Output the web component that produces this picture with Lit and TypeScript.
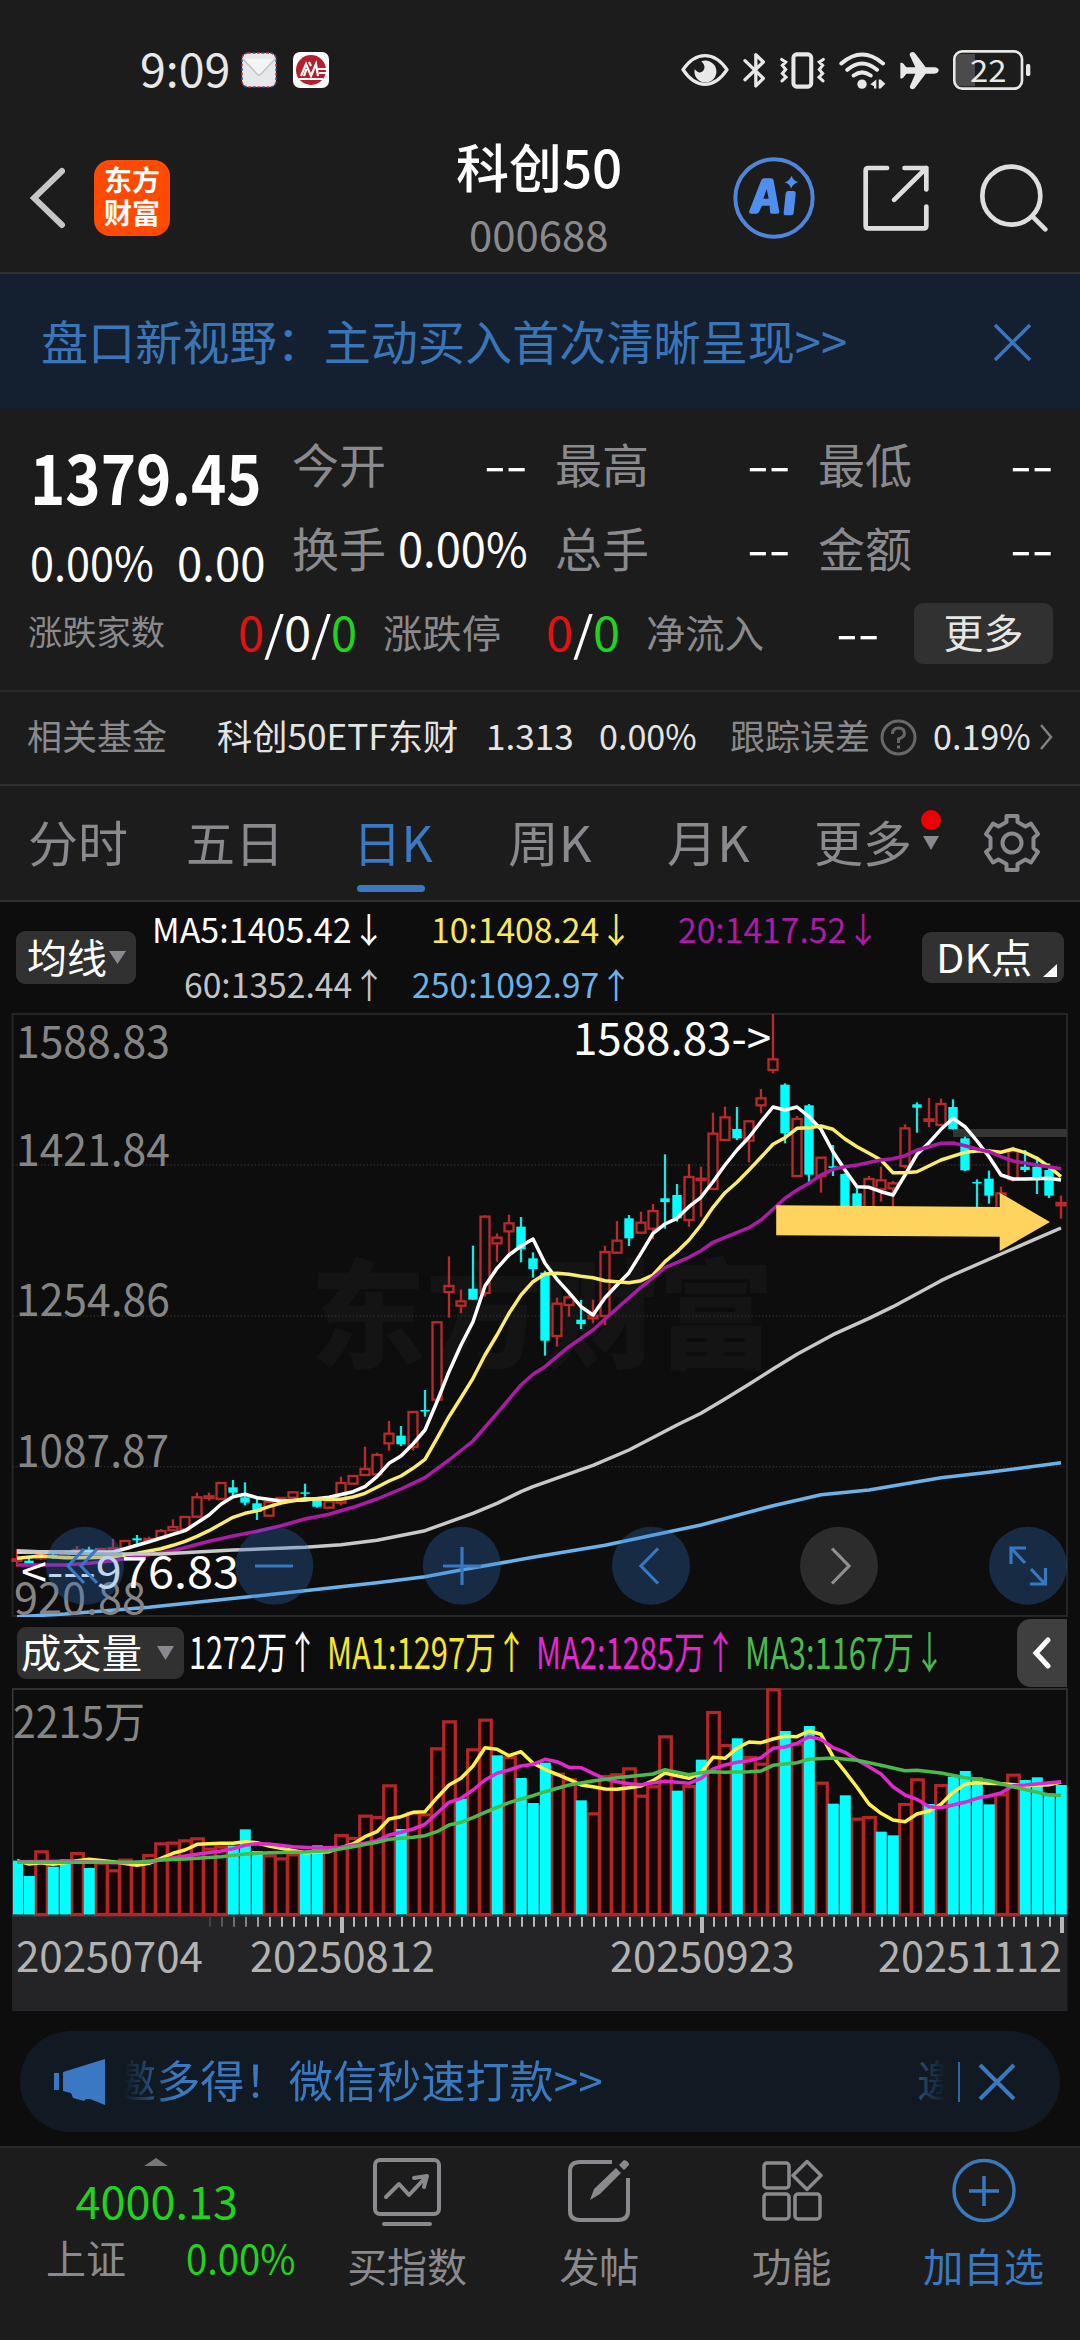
import { LitElement, html, svg, css } from "lit";
import { customElement, property, query } from "lit/decorators.js";

type Kind = "r" | "c";
type Candle = [Kind, number, number, number, number, number];

/* Daily bars: kind, high, body top, body bottom, low, volume top (thirds of a pixel). */
const CANDLES: Candle[] = [
  ["r", 1647, 1678, 1682, 1700, 572], ["c", 1675, 1682, 1692, 1695, 618], ["r", 1660, 1664, 1675, 1680, 541],
  ["c", 1658, 1664, 1670, 1676, 590], ["r", 1655, 1660, 1668, 1674, 568], ["r", 1638, 1650, 1658, 1662, 546],
  ["c", 1640, 1648, 1652, 1660, 594], ["r", 1644, 1647, 1652, 1656, 575], ["r", 1617, 1645, 1652, 1660, 598],
  ["r", 1621, 1623, 1646, 1648, 566], ["c", 1605, 1615, 1621, 1631, 578], ["r", 1610, 1617, 1620, 1628, 552],
  ["r", 1587, 1593, 1613, 1615, 517], ["r", 1558, 1581, 1591, 1593, 515], ["r", 1549, 1551, 1588, 1590, 508],
  ["r", 1478, 1492, 1550, 1553, 502], ["r", 1478, 1489, 1492, 1502, 533], ["r", 1446, 1449, 1497, 1498, 527],
  ["c", 1440, 1462, 1478, 1490, 527], ["c", 1447, 1492, 1508, 1516, 478], ["c", 1490, 1510, 1536, 1560, 543],
  ["r", 1505, 1506, 1547, 1549, 553], ["r", 1492, 1494, 1502, 1503, 562], ["r", 1474, 1477, 1493, 1495, 550],
  ["c", 1451, 1477, 1481, 1490, 549], ["c", 1499, 1500, 1520, 1523, 526], ["r", 1500, 1504, 1523, 1525, 535],
  ["r", 1430, 1449, 1508, 1516, 492], ["r", 1426, 1428, 1451, 1452, 501], ["r", 1340, 1407, 1425, 1427, 434],
  ["r", 1358, 1365, 1423, 1425, 438], ["r", 1263, 1301, 1330, 1352, 343], ["c", 1278, 1307, 1333, 1338, 477],
  ["r", 1234, 1236, 1341, 1352, 425], ["c", 1170, 1230, 1234, 1250, 430], ["r", 965, 967, 1199, 1201, 232],
  ["r", 769, 858, 876, 953, 151], ["r", 869, 904, 917, 940, 386], ["c", 737, 866, 899, 900, 235],
  ["r", 646, 650, 879, 890, 146], ["r", 700, 713, 730, 785, 256], ["r", 644, 670, 694, 762, 258],
  ["c", 651, 680, 748, 787, 324], ["c", 757, 775, 807, 833, 399], ["c", 812, 818, 1022, 1067, 278],
  ["r", 893, 911, 1008, 1040, 308], ["r", 880, 892, 915, 950, 325], ["c", 900, 959, 972, 987, 391],
  ["r", 899, 947, 955, 970, 427], ["r", 737, 756, 948, 975, 315], ["r", 663, 722, 758, 760, 310],
  ["c", 645, 655, 715, 738, 292], ["r", 635, 668, 698, 700, 374], ["r", 612, 633, 686, 718, 346],
  ["c", 463, 595, 606, 686, 196], ["c", 552, 585, 655, 665, 362], ["r", 492, 531, 660, 680, 345],
  ["r", 500, 536, 539, 650, 269], ["r", 338, 401, 567, 569, 123], ["r", 320, 352, 420, 422, 222],
  ["c", 321, 387, 415, 420, 205], ["r", 361, 364, 422, 487, 258], ["r", 267, 295, 316, 340, 278],
  ["r", 42, 178, 210, 220, 55], ["c", 250, 254, 400, 430, 183], ["r", 348, 357, 528, 530, 218],
  ["c", 312, 316, 524, 548, 168], ["r", 470, 473, 528, 578, 335], ["c", 435, 499, 503, 528, 401],
  ["c", 520, 522, 640, 640, 376], ["c", 560, 580, 640, 640, 443], ["r", 528, 537, 640, 640, 438],
  ["r", 500, 541, 568, 605, 485], ["r", 543, 550, 565, 640, 496], ["r", 373, 385, 498, 505, 399],
  ["c", 307, 313, 323, 398, 325], ["r", 294, 358, 362, 381, 402], ["r", 296, 312, 375, 377, 342],
  ["c", 298, 321, 387, 389, 320], ["c", 410, 415, 511, 513, 303], ["c", 538, 546, 550, 622, 322],
  ["c", 512, 536, 587, 611, 403], ["r", 560, 580, 640, 640, 370], ["r", 440, 453, 538, 545, 311],
  ["c", 450, 500, 510, 516, 330], ["c", 470, 500, 533, 582, 322], ["c", 490, 510, 587, 594, 370],
  ["r", 587, 609, 616, 656, 345],
];

/* Volume bars that are filled; the rest are hollow. */
const VOL_FILLED = new Set([
  0, 1, 3, 4, 6, 18, 19, 20, 24, 25, 32, 37, 40, 42, 43, 44, 47, 55, 57, 60, 64, 66, 68, 69, 72, 73, 76, 78, 79, 80,
  81, 84, 85, 86, 87,
]);

const MA5 = "0 1656 4 1656 8 1656 9 1646 11 1625 14 1592 16 1545 17 1513 18 1490 19 1483 20 1493 22 1503 24 1500 26 1492 28 1475 29 1460 30 1430 31 1390 32 1368 33 1332 34 1290 35 1205 36 1115 37 1035 38 965 39 858 40 805 41 765 42 738 43 717 44 790 45 838 46 878 47 920 48 945 49 893 50 855 51 818 52 760 53 700 54 672 55 655 56 620 57 592 58 545 59 495 60 450 61 412 62 365 63 321 64 330 65 321 66 350 67 388 68 455 69 510 70 560 71 562 72 575 73 585 74 525 75 463 76 428 77 388 78 355 79 380 80 423 81 470 82 525 83 537 84 537 85 536 86 535 87 540";
const MA10 = "0 1675 2 1668 4 1673 6 1673 8 1670 10 1660 12 1646 13 1636 14 1624 15 1609 16 1592 17 1572 18 1552 19 1540 20 1532 21 1520 22 1509 23 1502 24 1496 25 1497 26 1498 27 1498 28 1491 29 1480 30 1462 31 1443 32 1428 33 1405 34 1378 35 1315 36 1250 37 1193 38 1135 39 1065 40 1005 41 940 42 885 43 845 44 822 45 820 46 823 47 829 48 833 49 842 50 845 51 848 52 842 53 825 54 785 55 755 56 720 57 675 58 622 59 578 60 547 61 510 62 472 63 433 64 413 65 385 66 383 67 378 68 388 69 417 70 440 71 460 72 480 73 518 74 518 75 515 77 480 79 457 80 453 81 453 82 457 83 447 84 458 85 475 86 500 87 530";
const MA20 = "0 1695 4 1695 6 1690 8 1682 10 1670 13 1652 16 1624 18 1608 20 1594 22 1577 24 1557 26 1543 28 1522 30 1497 32 1467 34 1433 36 1380 38 1323 40 1240 42 1155 43 1123 44 1100 46 1040 48 990 49 957 51 893 52 862 53 833 54 803 56 772 57 752 58 727 61 683 62 660 63 628 64 595 65 570 66 550 67 525 68 508 69 500 70 495 72 480 73 476 74 467 75 450 76 440 77 430 78 429 79 437 80 447 81 455 82 470 83 483 85 495 87 506";
const MA60 = "0 1652 6 1662 12 1662 18 1650 24 1642 27 1634 30 1621 34 1592 38 1540 40 1510 42 1475 43 1460 48 1396 51 1350 55 1275 57 1240 59 1197 61 1153 63 1107 65 1063 68 1004 71 955 73 920 77 842 78 825 82 762 87 684";
const MA250 = "0 1850 4 1842 11 1822 20 1788 30 1748 34 1730 37 1710 43 1672 49 1636 57 1575 63 1517 67 1484 71 1470 77 1433 81 1417 87 1388";
const VMA1 = "0 572 1 582 2 578 3 583 4 578 5 572 6 568 8 575 10 586 11 580 12 565 13 550 14 540 15 523 16 521 17 520 18 520 19 515 20 518 21 528 22 535 24 548 26 545 27 533 28 522 29 500 30 485 31 447 32 440 33 427 34 425 35 383 36 345 37 325 38 288 39 233 40 238 41 257 42 245 43 280 44 298 45 313 46 328 47 345 48 350 49 357 50 358 51 353 52 348 53 332 54 309 55 317 56 325 57 308 58 262 59 265 60 235 61 216 62 218 63 207 64 199 65 200 66 183 67 193 68 260 69 305 70 352 71 402 72 430 73 450 74 455 75 432 76 423 77 403 78 367 79 343 80 338 82 341 84 347 86 344 87 336";
const VMA2 = "0 575 4 574 6 575 8 578 11 576 13 563 15 553 17 543 18 536 19 526 20 521 21 522 23 530 25 534 27 532 29 520 30 512 31 495 32 487 33 477 34 463 35 430 36 397 37 385 38 360 39 330 40 310 41 300 42 288 43 283 44 268 45 275 46 292 47 293 48 310 49 327 50 335 51 341 52 344 53 338 54 334 55 337 56 340 57 325 58 297 59 285 60 277 61 272 62 263 63 235 64 231 65 220 66 200 67 208 68 233 69 247 70 270 71 290 72 312 73 350 74 375 75 388 76 410 77 413 78 405 79 397 80 385 81 378 82 369 83 347 84 345 87 335";
const VMA3 = "0 577 10 577 12 570 14 567 17 560 19 552 21 548 24 546 26 542 28 530 30 517 31 508 33 502 34 497 35 485 36 465 37 457 38 443 39 427 40 412 41 398 42 387 43 377 44 365 46 345 48 333 50 323 53 312 54 299 56 314 57 308 58 305 59 307 61 305 62 303 63 286 65 278 66 268 68 264 70 271 72 286 74 302 75 301 77 309 79 323 81 332 83 350 85 367 86 375 87 376";

const cx = (i: number) => 17 + 12 * i;

function linePoints(src: string, base: number): string {
  const n = src.split(" ").map(Number);
  const out: string[] = [];
  for (let k = 0; k < n.length; k += 2) out.push(`${cx(n[k])},${(base + n[k + 1] / 3).toFixed(1)}`);
  return out.join(" ");
}

function label(x: number, y: number, w: number, size: number, cls: string, text: string) {
  return svg`<text class=${cls} x=${x} y=${y} font-size=${size} textLength=${w} lengthAdjust="spacingAndGlyphs">${text}</text>`;
}

/* One line of text, condensed or widened to an exact advance width. */
@customElement("fit-text")
export class FitText extends LitElement {
  @property({ type: Number }) w = 0;
  @property() text = "";
  @query("span") private line!: HTMLSpanElement;

  static styles = css`
    :host { display: inline-block; flex: none; line-height: 1; }
    span { display: inline-block; white-space: pre; transform-origin: 0 50%; line-height: 1; }
  `;

  render() {
    return html`<span>${this.text}</span>`;
  }

  updated() {
    const natural = this.line.offsetWidth;
    if (!natural) return;
    this.style.width = `${this.w}px`;
    this.line.style.marginRight = `${this.w - natural}px`;
    this.line.style.transform = `translateY(-0.06em) scaleX(${this.w / natural})`;
  }
}

@customElement("price-chart")
export class PriceChart extends LitElement {
  static styles = css`
    :host { display: block; height: 604px; }
    svg { display: block; font-family: "Noto Sans CJK SC", sans-serif; }
    .frame { fill: none; stroke: #252525; stroke-width: 2; }
    .grid { stroke: #292929; stroke-width: 1.5; stroke-dasharray: 1.5 2; }
    .mark { fill: #141414; font-weight: 900; }
    .scale { fill: #858585; }
    .peak { fill: #fff; }
    .line { fill: none; stroke-width: 3.5; stroke-linejoin: round; }
    .rw { stroke: #b92a2a; stroke-width: 2.3; fill: #0d0d0d; }
    .cw { stroke: #1fe4e4; stroke-width: 2.3; }
    .cb { fill: #00ffff; }
    .blue { fill: #2d72c6; fill-opacity: 0.3; }
    .gray { fill: #ffffff; fill-opacity: 0.13; }
    .ic { fill: none; stroke: #3877c2; stroke-width: 3.2; }
    .ic.off { stroke: #909090; }
  `;

  private candle([kind, hi, top, bot, lo]: Candle, i: number) {
    const x = cx(i);
    const y = (v: number) => 1000 + v / 3;
    const h = Math.max((bot - top) / 3, 1.5);
    return kind === "c"
      ? svg`<line class="cw" x1=${x} x2=${x} y1=${y(hi)} y2=${y(lo)} /><rect class="cb" x=${x - 4.7} y=${y(top)} width="9.4" height=${h} />`
      : svg`<line class="rw" x1=${x} x2=${x} y1=${y(hi)} y2=${y(lo)} /><rect class="rw" x=${x - 4.5} y=${y(top)} width="9" height=${h} />`;
  }

  render() {
    return html`<svg width="1080" height="604" viewBox="0 1013 1080 604">
      ${label(310, 1358.5, 464, 118, "mark", "东方财富")}
      <rect class="frame" x="12.5" y="1014" width="1054.5" height="602" />
      ${[1165, 1316, 1466.7].map((y) => svg`<line class="grid" x1="13" x2="1067" y1=${y} y2=${y} />`)}
      <rect x="953" y="1129" width="114" height="8" fill="#353535" />
      ${CANDLES.map((c, i) => this.candle(c, i))}
      <polyline class="line" stroke="#fff" points=${linePoints(MA5, 1000)} />
      <polyline class="line" stroke="#fbec6d" points=${linePoints(MA10, 1000)} />
      <polyline class="line" stroke="#ac1ba6" points=${linePoints(MA20, 1000)} />
      <polyline class="line" stroke="#c8c8c8" points=${linePoints(MA60, 1000)} />
      <polyline class="line" stroke="#6cb2ea" points=${linePoints(MA250, 1000)} />
      ${label(16, 1057.5, 154, 45, "scale", "1588.83")}
      ${label(16, 1165.5, 154, 45, "scale", "1421.84")}
      ${label(16, 1316, 154, 45, "scale", "1254.86")}
      ${label(16, 1467, 153, 45, "scale", "1087.87")}
      ${label(14, 1613.5, 132, 44, "scale", "920.88")}
      ${label(573, 1055, 198, 45, "peak", "1588.83->")}
      ${label(21, 1587.5, 218, 44, "peak", "<---976.83")}
      <path fill="#fed35e" d="M776.2 1205.3 L999.7 1207 V1192.7 L1050 1222 L999.7 1251 V1236.8 L776.2 1235.2 Z" />
      ${[85, 274.3, 461.8, 651, 1028].map((x) => svg`<circle class="blue" cx=${x} cy="1565.7" r="39" />`)}
      <circle class="gray" cx="839" cy="1565.7" r="39" />
      <path class="ic" d="M84 1549 L68 1566 L84 1583 M97 1549 L81 1566 L97 1583" />
      <path class="ic" d="M255 1566 H293" />
      <path class="ic" d="M443 1566 H481 M462 1547 V1585" />
      <path class="ic" d="M658 1548.5 L641 1566 L658 1583.5" />
      <path class="ic off" d="M832 1548.5 L849 1566 L832 1583.5" />
      <path class="ic" d="M1026 1548 H1011 V1564 M1011 1548 L1025 1563 M1030 1584 H1045.500 V1568 M1045 1584 L1031 1569" />
    </svg>`;
  }
}

@customElement("volume-chart")
export class VolumeChart extends LitElement {
  static styles = css`
    :host { display: block; height: 324px; }
    svg { display: block; font-family: "Noto Sans CJK SC", sans-serif; }
    .frame { fill: none; stroke: #3c3c3c; stroke-width: 1.4; }
    .up { fill: #150606; stroke: #b52626; stroke-width: 3.2; }
    .down { fill: #00ffff; }
    .line { fill: none; stroke-width: 3.5; stroke-linejoin: round; }
    .scale { fill: #858585; }
    .date { fill: #b2b2b2; }
    .tick { stroke: #b8b8b8; }
  `;

  render() {
    const floor = 1914.5;
    const ticks = Array.from({ length: 72 }, (_, k) => k + 16);
    return html`<svg width="1080" height="324" viewBox="0 1688 1080 324">
      <rect x="12" y="1917" width="1055.500" height="94" fill="#242426" />
      <path class="frame" d="M12.700 1916 V1689 H1067 V1916 Z" />
      ${label(13, 1737.5, 132, 43, "scale", "2215万")}
      ${CANDLES.map((c, i) => {
        const y = 1670 + c[5] / 3;
        return VOL_FILLED.has(i) ? svg`` : svg`<rect class="up" x=${cx(i) - 5.3} y=${y + 1.5} width="11.600" height=${floor - y - 1.5} />`;
      })}
      ${CANDLES.map((c, i) => {
        const y = 1670 + c[5] / 3;
        return VOL_FILLED.has(i) ? svg`<rect class="down" x=${cx(i) - (i ? 5.2 : 4)} y=${y} width=${i ? 11 : 10} height=${floor - y} />` : svg``;
      })}
      <polyline class="line" stroke="#fff04a" points=${linePoints(VMA1, 1670)} />
      <polyline class="line" stroke="#e128cf" points=${linePoints(VMA2, 1670)} />
      <polyline class="line" stroke="#4bb94b" points=${linePoints(VMA3, 1670)} />
      ${ticks.map((i) => {
        const major = i === 27 || i === 57 || i === 87;
        return svg`<line class="tick" x1=${cx(i) + 1} x2=${cx(i) + 1} y1="1917" y2=${major ? 1933 : 1926.7}
          stroke-width=${major ? 4 : 2} opacity=${Math.min(1, 0.2 + (i - 16) * 0.15)} />`;
      })}
      ${label(16, 1971.5, 187, 42, "date", "20250704")}
      ${label(250, 1971.5, 185, 42, "date", "20250812")}
      ${label(610, 1971.5, 185, 42, "date", "20250923")}
      ${label(878, 1971.5, 184, 42, "date", "20251112")}
    </svg>`;
  }
}

@customElement("app-root")
export class AppRoot extends LitElement {
  static styles = css`
    :host {
      display: block; width: 1080px; height: 2340px; overflow: hidden; background: #0d0d0d; color: #fff;
      font-family: "Noto Sans CJK SC", sans-serif; line-height: 1;
    }
    * { box-sizing: border-box; }
    svg { display: block; flex: none; }
    .row { display: flex; align-items: center; }
    .top { background: #1c1c1c; }
    .muted { color: #8a8a8e; }
    .red { color: #e01212; }
    .green { color: #1fd31f; }

    .status { height: 122px; padding: 18px 49px 0 140px; color: #e8e8e8; }
    .status .time { font-size: 46px; margin-right: 11px; }
    .status .mail { margin-right: 16px; }
    .status .icons { margin-left: auto; gap: 14px; }
    .batt { width: 78px; height: 40px; }
    .battery { position: relative; width: 78px; height: 40px; }
    .battery fit-text { position: absolute; left: 17px; top: 5px; font-size: 31px; }

    .nav { display: grid; grid-template-columns: 1fr 170px 1fr; height: 152px; padding: 0 32px 0 30px; border-bottom: 2px solid #303030; }
    .nav .left { gap: 29px; padding-top: 2px; }
    .logo {
      width: 76px; height: 76px; border-radius: 16px; background: #ff4a03; display: flex; flex-direction: column;
      align-items: center; justify-content: center; font-size: 28px; font-weight: 700; line-height: 33px; padding-bottom: 4px;
    }
    .title { display: flex; flex-direction: column; align-items: center; padding-top: 21px; }
    .title .name { font-size: 52px; font-weight: 500; }
    .title .code { font-size: 41px; color: #8a8a8e; margin-top: 20px; }
    .nav .right { justify-content: flex-end; padding-top: 2px; }
    .nav .right .share { margin: 0 51px 0 48px; }

    .banner { height: 135px; padding: 1px 48px 0 41px; background: #142030; color: #3a75b8; justify-content: space-between; font-size: 47px; }

    .quote { height: 281px; }
    .main { display: flex; height: 182px; padding-left: 30px; }
    .price { width: 262px; display: flex; flex-direction: column; padding-top: 36px; }
    .price .big { font-size: 69px; font-weight: 700; }
    .price .chg { font-size: 46px; gap: 23px; margin-top: 27px; }
    .grid { display: grid; grid-template-columns: repeat(3, 236px); column-gap: 27px; grid-auto-rows: 84px; padding-top: 14px; font-size: 47px; }
    .cell { display: flex; align-items: center; justify-content: space-between; }
    .third { height: 84px; padding-left: 28px; font-size: 39px; }
    .third .n { font-size: 47px; width: 126px; justify-content: flex-end; margin-left: 66px; margin-right: 26px; }
    .third .n.b { width: 74px; margin-left: 45px; margin-right: 26px; }
    .third .d { font-size: 47px; margin: 0 34px 0 72px; }
    .third .l1 { font-size: 34px; }
    .more { width: 139px; height: 61px; border-radius: 9px; background: #313131; color: #e6e6e6; display: flex; align-items: center; justify-content: center; font-size: 40px; }

    .fund { height: 94px; border-top: 2px solid #282828; padding: 0 0 2px 27px; font-size: 35.5px; color: #e4e4e4; }
    .fund .a { margin-left: 50px; }
    .fund .b { margin-left: 28px; }
    .fund .c { margin-left: 25px; }
    .fund .d { margin: 0 10px 0 33px; }
    .fund .e { margin: 0 8px 0 16px; }

    .tabs { height: 118px; border-top: 2px solid #303030; border-bottom: 2px solid #303030; padding-left: 28px; font-size: 49px; color: #8a8a8e; }
    .tab { position: relative; }
    .tab.on { color: #3a79c4; }
    .tab.on::after { content: ""; position: absolute; left: 4px; top: 66px; width: 68px; height: 7px; border-radius: 4px; background: #3978c2; }
    .t2 { margin-left: 58px; }
    .t3 { margin-left: 69px; }
    .t4 { margin-left: 75px; }
    .t5 { margin-left: 75px; }
    .t6 { margin-left: 64px; }
    .drop { margin-left: 9px; }
    .gear { margin-left: 41px; }

    .legend { height: 111px; padding: 0 16px; }
    .chip { border-radius: 9px; background: #313131; display: flex; align-items: center; font-size: 40px; flex: none; }
    .avg { width: 120px; height: 53px; padding-left: 11px; gap: 2px; }
    .dk { width: 142px; height: 51px; padding-left: 14px; gap: 11px; margin-left: 43px; }
    .mas { display: grid; grid-template-columns: repeat(3, 247px); grid-auto-rows: 55px; justify-items: end; align-items: center; font-size: 34.5px; width: 743px; padding-left: 3px; }
    .m5 { color: #fff; }
    .m10 { color: #f8e85f; }
    .m20 { color: #ac1ba6; }
    .m60 { color: #c4c4c4; }
    .m250 { color: #6cb2ea; }

    .vol { height: 71px; padding-left: 17px; font-size: 44px; padding-right: 13px; }
    .vchip { width: 167px; height: 52px; padding-left: 4px; gap: 15px; margin-right: 5px; }
    .v1 { margin-left: 9px; color: #f5e62e; }
    .v2 { margin-left: 9px; color: #e128cf; }
    .v3 { margin-left: 9px; color: #4bb94b; }
    .fold { margin-left: auto; width: 50px; height: 68px; border-radius: 14px 0 0 14px; background: #3f3f3f; display: flex; align-items: center; justify-content: center; }

    .notice { margin: 19px 20px 14px; height: 101px; border-radius: 51px; background: #111a22; padding-left: 34px; padding-right: 44px; color: #3a78c0; font-size: 44px; }
    .ticker { width: 826px; height: 60px; margin-left: 19px; overflow: hidden; display: flex; align-items: center; -webkit-mask-image: linear-gradient(90deg, transparent, #000 50px, #000 calc(100% - 50px), transparent); mask-image: linear-gradient(90deg, transparent, #000 50px, #000 calc(100% - 50px), transparent); }
    .ticker fit-text:first-child { margin-left: -12px; }
    .ticker fit-text + fit-text { margin-left: 314px; }
    .bar { width: 2px; height: 40px; background: #2f66a8; margin: 0 18px 0 12px; }

    .bottom { height: 194px; border-top: 2px solid #2a2a2a; display: grid; grid-template-columns: 311px repeat(4, 192.25px); }
    .index { display: flex; flex-direction: column; align-items: center; padding-top: 10px; }
    .index .v { font-size: 45px; margin: 14px 0 0 2px; }
    .index .r { width: 250px; justify-content: space-between; margin: 14px 0 0 31px; font-size: 40px; }
    .item { display: flex; flex-direction: column; align-items: center; color: #8a8a8e; font-size: 40px; padding-top: 8px; gap: 20px; }
    .item.on { color: #3a78c0; }
  `;

  private cell(name: string, value: string, w = 44) {
    return html`<div class="cell"><fit-text class="muted" w="94" text=${name}></fit-text><fit-text w=${w} text=${value}></fit-text></div>`;
  }

  private statusBar() {
    return html`<div class="row status">
      <fit-text class="time" w="90" text="9:09"></fit-text>
      <svg class="mail" width="36" height="36" viewBox="0 0 36 36">
        <rect x="1" y="1" width="34" height="34" rx="6" fill="#e6e8ea" stroke="#c33" stroke-width="1.500" stroke-dasharray="3 6" />
        <rect x="1" y="1" width="34" height="34" rx="6" fill="none" stroke="#3558a8" stroke-width="1.500" stroke-dasharray="3 6" stroke-dashoffset="4.500" />
        <path d="M2 7 L16 22 Q18 24 20 22 L34 7" fill="#f4f4f4" stroke="#c0c4c8" stroke-width="1.500" />
      </svg>
      <svg width="36" height="36" viewBox="0 0 36 36">
        <rect width="36" height="36" rx="7" fill="#fff" />
        <circle cx="18" cy="18" r="15" fill="#b3202e" />
        <path d="M8 24 L13 12 L18 24 L23 12 L25 24 M11 24 L13.500 17 M18 14 L16 10" fill="none" stroke="#fff" stroke-width="2.200" />
        <path d="M25 17 H33 M26 21 H33 M6 27 H30" stroke="#fff" stroke-width="2" />
      </svg>
      <div class="row icons">
        <svg width="48" height="36" viewBox="25 48 144 108" fill="none" stroke="#e8e8e8" stroke-width="10">
          <path d="M31 101 Q60 59 97 59 Q134 59 163 101 Q134 145 97 145 Q60 145 31 101 Z" stroke-linejoin="round" />
          <path d="M86 76 A33 33 0 1 1 66 100 Q80 116 92 104 Q102 92 86 76 Z" fill="#e8e8e8" stroke="none" />
        </svg>
        <svg width="23" height="37" viewBox="214 47 70 110" fill="none" stroke="#e8e8e8" stroke-width="10" stroke-linejoin="round" stroke-linecap="round">
          <path d="M220 72 L276 126 L253 149 V54 L276 76 L220 130" />
        </svg>
        <svg width="45" height="37" viewBox="328 47 134 110" fill="none" stroke="#e8e8e8" stroke-width="12" stroke-linecap="round">
          <rect x="368" y="54" width="53" height="96" rx="10" />
          <path stroke-width="9" d="M333 69 L345 77 L335 87 L345 99 L335 111 L346 122 L334 133 M457 69 L445 77 L455 87 L445 99 L455 111 L444 122 L456 133" />
        </svg>
        <svg width="47" height="37" viewBox="505 47 141 110" fill="none" stroke="#e8e8e8" stroke-width="12" stroke-linecap="round">
          <path d="M512 81 Q574 27 637 81 M530 100 Q574 62 619 100 M549 117 Q574 98 600 117" />
          <circle cx="574" cy="143" r="14" fill="#e8e8e8" stroke="none" />
          <path stroke="none" fill="#e8e8e8" d="M617 129 V156 H610 V149 L599 143 Z M624 129 H630 L644 142 L630 156 H624 Z" />
        </svg>
        <svg width="39" height="39" viewBox="687 44 117 115" fill="#e8e8e8">
          <path d="M688 79 Q694 77 698 82 L706 92 H733 L716 55 Q716 46 725 46 Q730 46 734 52 L764 92 H790 Q803 93 803 101 Q803 110 790 111 H764 L734 151 Q730 158 724 158 Q715 156 717 148 L733 111 H706 L698 122 Q694 127 688 125 Z" />
        </svg>
        <div class="battery">
          <svg class="batt" width="78" height="40" viewBox="846 42 234 120">
            <path d="M870 54 H912 V151 H870 Q855 151 855 136 V69 Q855 54 870 54 Z" fill="#4b4b4b" />
            <rect x="850" y="46" width="203" height="112" rx="24" fill="none" stroke="#e8e8e8" stroke-width="8" />
            <rect x="1065" y="84" width="13" height="36" rx="5" fill="#e8e8e8" />
          </svg>
          <fit-text w="36" text="22"></fit-text>
        </div>
      </div>
    </div>`;
  }

  private navBar() {
    return html`<div class="nav">
      <div class="row left">
        <svg width="35" height="62" viewBox="0 0 35 62" fill="none" stroke="#c6c6c6" stroke-width="6" stroke-linecap="round"><path d="M32 4 L4 31 L32 58" /></svg>
        <div class="logo"><span>东方</span><span>财富</span></div>
      </div>
      <div class="title"><fit-text class="name" w="166" text="科创50"></fit-text><fit-text class="code" w="140" text="000688"></fit-text></div>
      <div class="row right">
        <svg width="82" height="82" viewBox="192 366 246 246" fill="#4f8ff0">
          <circle cx="315" cy="489" r="116" fill="none" stroke="#4f86dc" stroke-width="12" />
          <path fill-rule="evenodd" d="M276 437 Q278 430 286 430 H306 Q313 430 314 437 L331 530 Q331 536 325 536 H309 Q303 536 303 530 L302 512 H279 L270 531 Q267 536 261 536 H246 Q238 535 241 527 Z M293 462 L283 491 H299 Z" />
          <path d="M350 475 Q351 468 358 468 H373 Q381 468 380 476 L374 534 Q373 541 366 541 H351 Q343 541 344 533 Z" />
          <path d="M368 422 Q372 437 388 441 Q372 446 366 461 Q362 446 347 442 Q362 437 368 422 Z" />
        </svg>
        <svg class="share" width="66" height="66" viewBox="580 390 197 197" fill="none" stroke="#dedede" stroke-width="14" stroke-linecap="round" stroke-linejoin="round">
          <path d="M652 399 H596 Q588 399 588 407 V571 Q588 579 596 579 H761 Q769 579 769 571 V514 M704 399 H769 V463 M769 399 L673 494" />
        </svg>
        <svg width="68" height="68" viewBox="928 385 204 204" fill="none" stroke="#dedede" stroke-width="14" stroke-linecap="round">
          <circle cx="1022" cy="480" r="87" /><path d="M1086 543 L1124 581" />
        </svg>
      </div>
    </div>`;
  }

  private quote() {
    return html`<div class="quote">
        <div class="main">
          <div class="price">
            <fit-text class="big" w="232" text="1379.45"></fit-text>
            <div class="row chg"><fit-text w="124" text="0.00%"></fit-text><fit-text w="88" text="0.00"></fit-text></div>
          </div>
          <div class="grid">
            ${this.cell("今开", "--")} ${this.cell("最高", "--")} ${this.cell("最低", "--")}
            ${this.cell("换手", "0.00%", 130)} ${this.cell("总手", "--")} ${this.cell("金额", "--")}
          </div>
        </div>
        <div class="row third">
          <fit-text class="muted l1" w="137" text="涨跌家数"></fit-text>
          <div class="row n"><fit-text class="red" w="26" text="0"></fit-text><fit-text w="20" text="/"></fit-text><fit-text w="27" text="0"></fit-text><fit-text w="20" text="/"></fit-text><fit-text class="green" w="26" text="0"></fit-text></div>
          <fit-text class="muted" w="118" text="涨跌停"></fit-text>
          <div class="row n b"><fit-text class="red" w="27" text="0"></fit-text><fit-text w="20" text="/"></fit-text><fit-text class="green" w="27" text="0"></fit-text></div>
          <fit-text class="muted" w="118" text="净流入"></fit-text>
          <fit-text class="d" w="44" text="--"></fit-text>
          <div class="more"><fit-text w="80" text="更多"></fit-text></div>
        </div>
      </div>
      <div class="row fund">
        <fit-text class="muted" w="140" text="相关基金"></fit-text>
        <fit-text class="a" w="241" text="科创50ETF东财"></fit-text>
        <fit-text class="b" w="88" text="1.313"></fit-text>
        <fit-text class="c" w="98" text="0.00%"></fit-text>
        <fit-text class="muted d" w="140" text="跟踪误差"></fit-text>
        <svg width="37" height="37" viewBox="0 0 37 37" fill="none" stroke="#68686a" stroke-width="3">
          <circle cx="18.500" cy="18.500" r="16.500" /><path d="M12.500 15 Q12.500 9 18.500 9 Q24.500 9 24.500 14.500 Q24.500 18 18.500 20 V24 M18.500 26.500 V29.500" />
        </svg>
        <fit-text class="e" w="98" text="0.19%"></fit-text>
        <svg width="14" height="26" viewBox="0 0 14 26" fill="none" stroke="#808084" stroke-width="2.500"><path d="M2 1 L12 13 L2 25" /></svg>
      </div>`;
  }

  private tabs() {
    return html`<div class="row tabs">
      <fit-text w="100" text="分时"></fit-text>
      <fit-text class="t2" w="98" text="五日"></fit-text>
      <div class="tab on t3"><fit-text w="80" text="日K"></fit-text></div>
      <fit-text class="t4" w="84" text="周K"></fit-text>
      <fit-text class="t5" w="83" text="月K"></fit-text>
      <fit-text class="t6" w="98" text="更多"></fit-text>
      <svg class="drop" width="20" height="66" viewBox="0 0 20 66"><circle cx="10" cy="10" r="10" fill="#ee0000" /><path d="M2 26 H18 L10 40 Z" fill="#8a8a8e" /></svg>
      <svg class="gear" width="60" height="60" viewBox="0 0 60 60" fill="none" stroke="#8a8a8e" stroke-width="4" stroke-linejoin="round">
        <path d="M24.500 3 H35.500 V9 L43.500 13.500 L49 10.500 L56 21 L51.500 25 V35 L56 39 L49 49.500 L43.500 46.500 L35.500 51 V57 H24.500 V51 L16.500 46.500 L11 49.500 L4 39 L8.500 35 V25 L4 21 L11 10.500 L16.500 13.500 L24.500 9 Z" />
        <circle cx="30" cy="30" r="9.500" />
      </svg>
    </div>`;
  }

  private legend() {
    return html`<div class="row legend">
      <div class="chip avg"><fit-text w="80" text="均线"></fit-text><svg width="17" height="13" viewBox="0 0 17 13"><path d="M0 0 H17 L8.500 13 Z" fill="#8a8a8e" /></svg></div>
      <div class="mas">
        <fit-text class="m5" w="234" text="MA5:1405.42↓"></fit-text>
        <fit-text class="m10" w="202" text="10:1408.24↓"></fit-text>
        <fit-text class="m20" w="202" text="20:1417.52↓"></fit-text>
        <fit-text class="m60" w="202" text="60:1352.44↑"></fit-text>
        <fit-text class="m250" w="221" text="250:1092.97↑"></fit-text>
      </div>
      <div class="chip dk"><fit-text w="96" text="DK点"></fit-text><svg width="14" height="38" viewBox="0 0 14 38"><path d="M14 25 V38 H0 Z" fill="#fff" /></svg></div>
    </div>`;
  }

  private volumeHead() {
    return html`<div class="row vol">
      <div class="chip vchip"><fit-text w="121" text="成交量"></fit-text><svg width="17" height="14" viewBox="0 0 17 14"><path d="M0 0 H17 L8.500 14 Z" fill="#8a8a8e" /></svg></div>
      <fit-text w="129" text="1272万↑"></fit-text>
      <fit-text class="v1" w="200" text="MA1:1297万↑"></fit-text>
      <fit-text class="v2" w="200" text="MA2:1285万↑"></fit-text>
      <fit-text class="v3" w="200" text="MA3:1167万↓"></fit-text>
      <div class="fold"><svg width="20" height="32" viewBox="0 0 20 32" fill="none" stroke="#fff" stroke-width="5" stroke-linecap="round"><path d="M16 3 L4 16 L16 29" /></svg></div>
    </div>`;
  }

  private bottomBar() {
    return html`<div class="bottom top">
      <div class="index">
        <svg width="24" height="8" viewBox="0 0 24 8"><path d="M12 0 L24 8 H0 Z" fill="#77777a" /></svg>
        <fit-text class="v green" w="162" text="4000.13"></fit-text>
        <div class="row r"><fit-text class="muted" w="80" text="上证"></fit-text><fit-text class="green" w="110" text="0.00%"></fit-text></div>
      </div>
      <div class="item">
        <svg width="68" height="71" viewBox="0 0 68 71" fill="none" stroke="#8a8a8e" stroke-width="4" stroke-linecap="round" stroke-linejoin="round">
          <rect x="2" y="4" width="64" height="54" rx="5" /><path d="M11 68 H57 M13 41 L26 28 L36 39 L53 21 M41 22 L54 20 L51 31" />
        </svg>
        <fit-text w="120" text="买指数"></fit-text>
      </div>
      <div class="item">
        <svg width="62" height="71" viewBox="0 0 62 71" fill="none" stroke="#8a8a8e" stroke-width="4">
          <path d="M44 6 H12 Q2 6 2 15 V55 Q2 64 12 64 H50 Q60 64 60 55 V22" /><path d="M22 44 L26 33 L48 12 L53 17 L32 38 Z M51 9 L56 4 Q61 5 61 9 L56 14 Z" fill="#8a8a8e" stroke="none" />
        </svg>
        <fit-text w="80" text="发帖"></fit-text>
      </div>
      <div class="item">
        <svg width="62" height="71" viewBox="0 0 62 71" fill="none" stroke="#8a8a8e" stroke-width="3.500" stroke-linejoin="round">
          <rect x="3" y="7" width="25" height="25" rx="3" /><rect x="3" y="38" width="25" height="25" rx="3" /><rect x="34" y="38" width="25" height="25" rx="3" />
          <path d="M46 5.500 L60 19.500 L46 33.500 L32 19.500 Z" />
        </svg>
        <fit-text w="80" text="功能"></fit-text>
      </div>
      <div class="item on">
        <svg width="66" height="71" viewBox="0 0 66 71" fill="none" stroke="#3a78c0" stroke-width="3.500">
          <circle cx="33" cy="34.500" r="30" /><path d="M18 35 H48 M33 20 V50" />
        </svg>
        <fit-text w="121" text="加自选"></fit-text>
      </div>
    </div>`;
  }

  render() {
    return html`
      <div class="top">
        ${this.statusBar()} ${this.navBar()}
        <div class="row banner">
          <fit-text w="806" text="盘口新视野：主动买入首次清晰呈现&gt;&gt;"></fit-text>
          <svg width="39" height="39" viewBox="0 0 39 39" stroke="#3a75b8" stroke-width="3.500"><path d="M2 2 L37 37 M37 2 L2 37" /></svg>
        </div>
        ${this.quote()} ${this.tabs()}
      </div>
      ${this.legend()}
      <price-chart></price-chart>
      ${this.volumeHead()}
      <volume-chart></volume-chart>
      <div class="row notice">
        <svg width="51" height="46" viewBox="0 0 51 46" fill="#3a78c4"><rect x="0" y="14" width="5" height="17" /><path d="M9 13 L51 0 V46 L36 40 H32 L30 42 L19 39 L17 34 L9 32 Z" /></svg>
        <div class="ticker"><fit-text w="491" text="邀多得！微信秒速打款&gt;&gt;"></fit-text><fit-text w="44" text="邀"></fit-text></div>
        <div class="bar"></div>
        <svg width="38" height="38" viewBox="0 0 38 38" stroke="#3a78c0" stroke-width="4"><path d="M2 2 L36 36 M36 2 L2 36" /></svg>
      </div>
      ${this.bottomBar()}
    `;
  }
}
